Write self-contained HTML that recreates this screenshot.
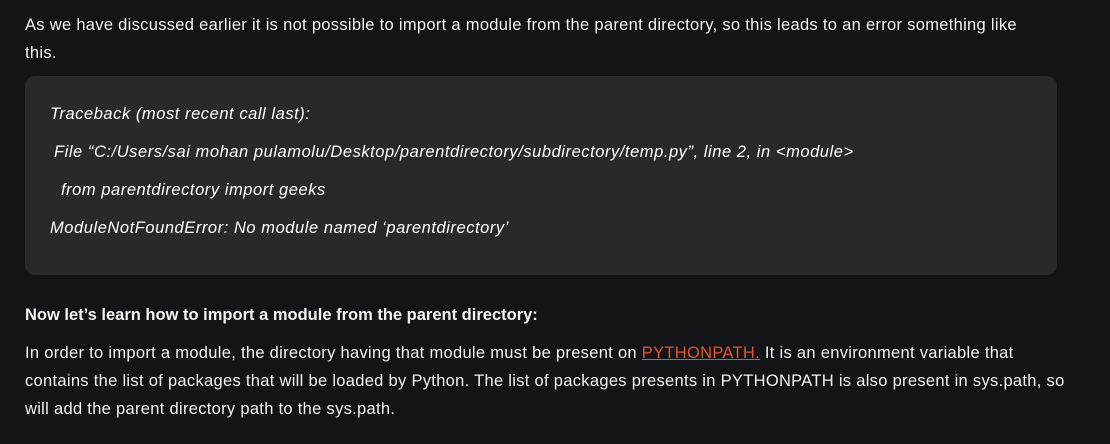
<!DOCTYPE html>
<html><head><style>
body{margin:0;background:#131417;width:1110px;height:444px;overflow:hidden;font-family:"Liberation Sans",sans-serif;color:#f2f2f2;}
.p{position:absolute;left:25px;font-size:16.5px;line-height:28px;letter-spacing:0.3px;}
.box{position:absolute;left:25px;top:76px;width:1032px;height:199px;background:#28292c;border-radius:10px;}
.c{position:absolute;left:50px;font-style:italic;font-size:16.5px;letter-spacing:0.55px;color:#fff;}
a{color:#e0552e;text-decoration:underline;}
</style></head><body>
<div class="p" style="top:11px;width:1010px">As we have discussed earlier it is not possible to import a module from the parent directory, so this leads to an error something like this.</div>
<div class="box"></div>
<div class="c" style="top:105px">Traceback (most recent call last):</div>
<div class="c" style="top:143px;left:54px">File “C:/Users/sai mohan pulamolu/Desktop/parentdirectory/subdirectory/temp.py”, line 2, in &lt;module&gt;</div>
<div class="c" style="top:181px;left:61px">from parentdirectory import geeks</div>
<div class="c" style="top:219px">ModuleNotFoundError: No module named ‘parentdirectory’</div>
<div class="p" style="top:301px;font-weight:bold;letter-spacing:0px">Now let’s learn how to import a module from the parent directory:</div>
<div class="p" style="top:339px;width:1045px">In order to import a module, the directory having that module must be present on <a>PYTHONPATH.</a> It is an environment variable that contains the list of packages that will be loaded by Python. The list of packages presents in PYTHONPATH is also present in sys.path, so will add the parent directory path to the sys.path.</div>
</body></html>
